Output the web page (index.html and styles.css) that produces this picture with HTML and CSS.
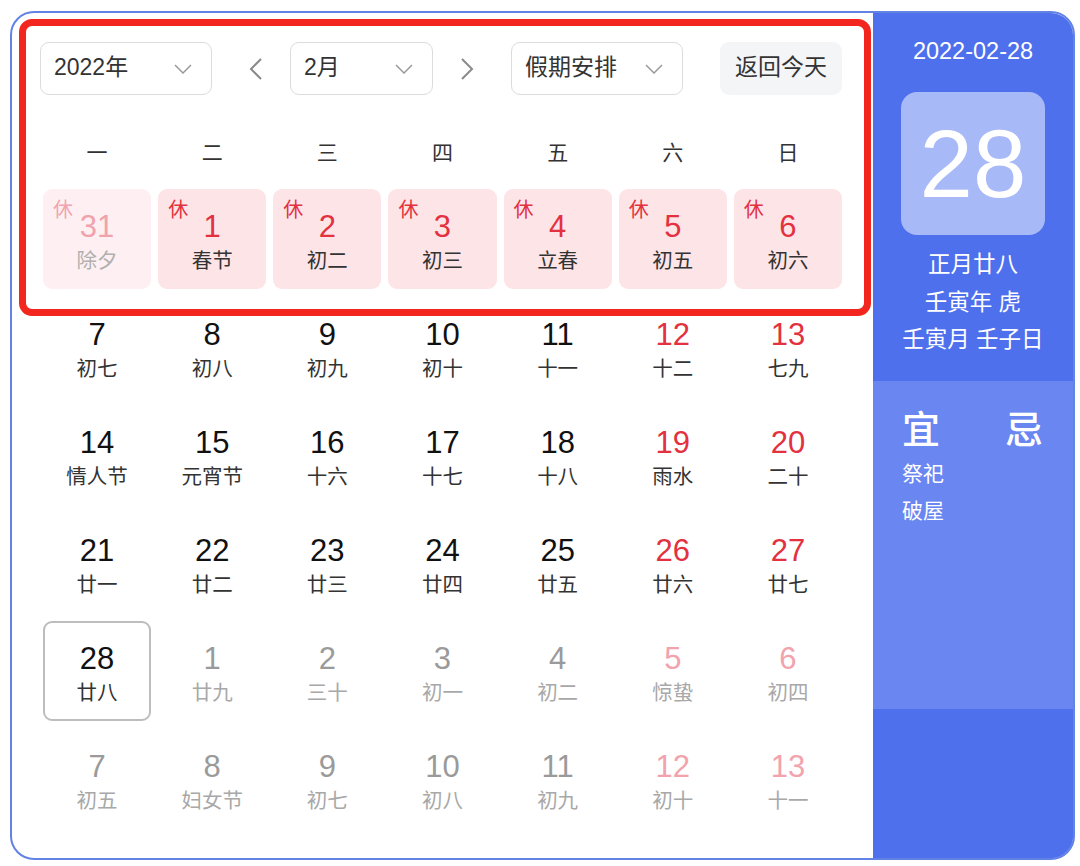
FILE: index.html
```html
<!DOCTYPE html>
<html lang="zh-CN">
<head>
<meta charset="utf-8">
<title>万年历</title>
<link rel="stylesheet" href="styles.css">
</head>
<body>
<div class="calendar">
  <div class="main">
    <div class="annotation"></div>
    <div class="toolbar">
      <div class="select select-year"><span>2022年</span>
        <svg class="chev" width="18" height="10" viewBox="0 0 18 10"><path d="M1 1l8 8 8-8" fill="none" stroke="#9a9a9a" stroke-width="1.5"/></svg>
      </div>
      <button class="arrow arrow-prev" type="button">
        <svg width="16" height="24" viewBox="0 0 16 24"><path d="M13 2L3 12l10 10" fill="none" stroke="#8a8a8a" stroke-width="2"/></svg>
      </button>
      <div class="select select-month"><span>2月</span>
        <svg class="chev" width="18" height="10" viewBox="0 0 18 10"><path d="M1 1l8 8 8-8" fill="none" stroke="#9a9a9a" stroke-width="1.5"/></svg>
      </div>
      <button class="arrow arrow-next" type="button">
        <svg width="16" height="24" viewBox="0 0 16 24"><path d="M3 2l10 10L3 22" fill="none" stroke="#8a8a8a" stroke-width="2"/></svg>
      </button>
      <div class="select select-holiday"><span>假期安排</span>
        <svg class="chev" width="18" height="10" viewBox="0 0 18 10"><path d="M1 1l8 8 8-8" fill="none" stroke="#9a9a9a" stroke-width="1.5"/></svg>
      </div>
      <button class="today-btn" type="button">返回今天</button>
    </div>

    <div class="weekdays">
      <span>一</span><span>二</span><span>三</span><span>四</span><span>五</span><span>六</span><span>日</span>
    </div>

    <div class="days">
      <div class="day holiday other"><i class="rest">休</i><b>31</b><em>除夕</em></div>
      <div class="day holiday"><i class="rest">休</i><b>1</b><em>春节</em></div>
      <div class="day holiday"><i class="rest">休</i><b>2</b><em>初二</em></div>
      <div class="day holiday"><i class="rest">休</i><b>3</b><em>初三</em></div>
      <div class="day holiday"><i class="rest">休</i><b>4</b><em>立春</em></div>
      <div class="day holiday"><i class="rest">休</i><b>5</b><em>初五</em></div>
      <div class="day holiday"><i class="rest">休</i><b>6</b><em>初六</em></div>

      <div class="day"><b>7</b><em>初七</em></div>
      <div class="day"><b>8</b><em>初八</em></div>
      <div class="day"><b>9</b><em>初九</em></div>
      <div class="day"><b>10</b><em>初十</em></div>
      <div class="day"><b>11</b><em>十一</em></div>
      <div class="day weekend"><b>12</b><em>十二</em></div>
      <div class="day weekend"><b>13</b><em>七九</em></div>

      <div class="day"><b>14</b><em>情人节</em></div>
      <div class="day"><b>15</b><em>元宵节</em></div>
      <div class="day"><b>16</b><em>十六</em></div>
      <div class="day"><b>17</b><em>十七</em></div>
      <div class="day"><b>18</b><em>十八</em></div>
      <div class="day weekend"><b>19</b><em>雨水</em></div>
      <div class="day weekend"><b>20</b><em>二十</em></div>

      <div class="day"><b>21</b><em>廿一</em></div>
      <div class="day"><b>22</b><em>廿二</em></div>
      <div class="day"><b>23</b><em>廿三</em></div>
      <div class="day"><b>24</b><em>廿四</em></div>
      <div class="day"><b>25</b><em>廿五</em></div>
      <div class="day weekend"><b>26</b><em>廿六</em></div>
      <div class="day weekend"><b>27</b><em>廿七</em></div>

      <div class="day selected"><b>28</b><em>廿八</em></div>
      <div class="day other"><b>1</b><em>廿九</em></div>
      <div class="day other"><b>2</b><em>三十</em></div>
      <div class="day other"><b>3</b><em>初一</em></div>
      <div class="day other"><b>4</b><em>初二</em></div>
      <div class="day other weekend"><b>5</b><em>惊蛰</em></div>
      <div class="day other weekend"><b>6</b><em>初四</em></div>

      <div class="day other"><b>7</b><em>初五</em></div>
      <div class="day other"><b>8</b><em>妇女节</em></div>
      <div class="day other"><b>9</b><em>初七</em></div>
      <div class="day other"><b>10</b><em>初八</em></div>
      <div class="day other"><b>11</b><em>初九</em></div>
      <div class="day other weekend"><b>12</b><em>初十</em></div>
      <div class="day other weekend"><b>13</b><em>十一</em></div>
    </div>
  </div>

  <aside class="side">
    <div class="side-top">
      <div class="side-date">2022-02-28</div>
      <div class="side-big">28</div>
      <div class="side-lunar">
        <div>正月廿八</div>
        <div>壬寅年 虎</div>
        <div>壬寅月 壬子日</div>
      </div>
    </div>
    <div class="side-mid">
      <div class="yiji"><span>宜</span><span>忌</span></div>
      <div class="yi-list">
        <div>祭祀</div>
        <div>破屋</div>
      </div>
    </div>
    <div class="side-bottom"></div>
  </aside>
</div>
</body>
</html>
```

FILE: styles.css
```css
* { box-sizing: border-box; }

html, body {
  margin: 0;
  padding: 0;
  background: #ffffff;
}

body {
  font-family: "Liberation Sans", "Noto Sans CJK SC", sans-serif;
  color: #333;
}

.calendar {
  margin: 11px 0 0 10px;
  width: 1065px;
  height: 849px;
  border: 2px solid #6282e4;
  border-radius: 24px;
  overflow: hidden;
  display: flex;
  background: #fff;
}

.main {
  position: relative;
  width: 861px;
  flex: none;
  padding: 29px 0 0 28px;
}

.annotation {
  position: absolute;
  left: 7px;
  top: 6px;
  width: 852px;
  height: 297px;
  border: 7px solid #f2261f;
  border-radius: 13px;
  pointer-events: none;
  z-index: 2;
}

.toolbar {
  display: flex;
  align-items: center;
  height: 53px;
}

.select {
  height: 53px;
  border: 1px solid #dcdcdc;
  border-radius: 9px;
  display: flex;
  align-items: center;
  justify-content: space-between;
  padding: 0 19px 0 13px;
  font-size: 23px;
  color: #333;
  background: #fff;
}

.select span { line-height: 1; margin-top: -2px; }

.select-year { width: 172px; }
.select-month { width: 143px; }
.select-holiday { width: 172px; }

.chev { flex: none; }

.arrow {
  border: 0;
  background: none;
  padding: 0;
  width: 16px;
  height: 24px;
  display: flex;
  align-items: center;
  justify-content: center;
}
.arrow-prev { margin: 0 26px 0 36px; }
.arrow-next { margin: 0 36px 0 26px; }

.today-btn {
  margin-left: 37px;
  width: 122px;
  height: 53px;
  border: 0;
  border-radius: 9px;
  background: #f4f5f7;
  font-family: "Liberation Sans", "Noto Sans CJK SC", sans-serif;
  font-size: 23px;
  line-height: 1;
  padding: 0 0 3px;
  color: #333;
}

.weekdays {
  margin: 40px 0 0 3px;
  width: 799px;
  height: 36px;
  display: grid;
  grid-template-columns: repeat(7, 1fr);
  column-gap: 7px;
  font-size: 21px;
  line-height: 36px;
  text-align: center;
  color: #333;
}

.days {
  margin: 18px 0 0 3px;
  width: 799px;
  display: grid;
  grid-template-columns: repeat(7, 1fr);
  grid-auto-rows: 100px;
  column-gap: 7px;
  row-gap: 8px;
}

.day {
  position: relative;
  display: flex;
  flex-direction: column;
  align-items: center;
  padding-top: 20px;
  border-radius: 9px;
  border: 2px solid transparent;
}

.day b {
  font-weight: 400;
  font-size: 31px;
  line-height: 34px;
  color: #111;
  margin-top: -1px;
}

.day em {
  font-style: normal;
  font-size: 20.5px;
  line-height: 28px;
  margin-top: 3px;
  color: #333;
}

.day.weekend b { color: #e3313f; }

.day.holiday { background: #fde4e7; }
.day.holiday b { color: #e3313f; }

.rest {
  position: absolute;
  left: 8px;
  top: 7px;
  font-style: normal;
  font-size: 20px;
  line-height: 24px;
  color: #e3313f;
}

.day.other b { color: #9a9a9a; }
.day.other em { color: #a8a8a8; }
.day.other.weekend b { color: #f2a3ad; }

.day.holiday.other { background: #fef0f2; }
.day.holiday.other b { color: #f0a3ad; }
.day.holiday.other .rest { color: #f2a3ad; }
.day.holiday.other em { color: #b0b0b0; }

.day.selected {
  border-color: #bdbdbd;
}

.side {
  flex: 1;
  display: flex;
  flex-direction: column;
  background: #4f70ec;
  color: #fff;
}

.side-top {
  height: 368px;
  padding-top: 24px;
  display: flex;
  flex-direction: column;
  align-items: center;
}

.side-date {
  font-size: 23.5px;
  line-height: 28px;
}

.side-big {
  margin-top: 27px;
  width: 144px;
  height: 143px;
  border-radius: 16px;
  background: #a8b9f7;
  display: flex;
  align-items: center;
  justify-content: center;
  font-size: 96px;
  line-height: 1;
  color: #fff;
}

.side-lunar {
  margin-top: 11px;
  font-size: 22.5px;
  line-height: 37.5px;
  text-align: center;
}

.side-mid {
  height: 328px;
  background: #6986f1;
  padding: 27px 30px 0 29px;
}

.yiji {
  display: flex;
  justify-content: space-between;
  font-size: 38px;
  font-weight: 500;
  line-height: 44px;
}

.yi-list {
  margin-top: 3px;
  font-size: 21px;
  line-height: 37px;
}

.side-bottom {
  flex: 1;
  background: #4f70ec;
}
```
